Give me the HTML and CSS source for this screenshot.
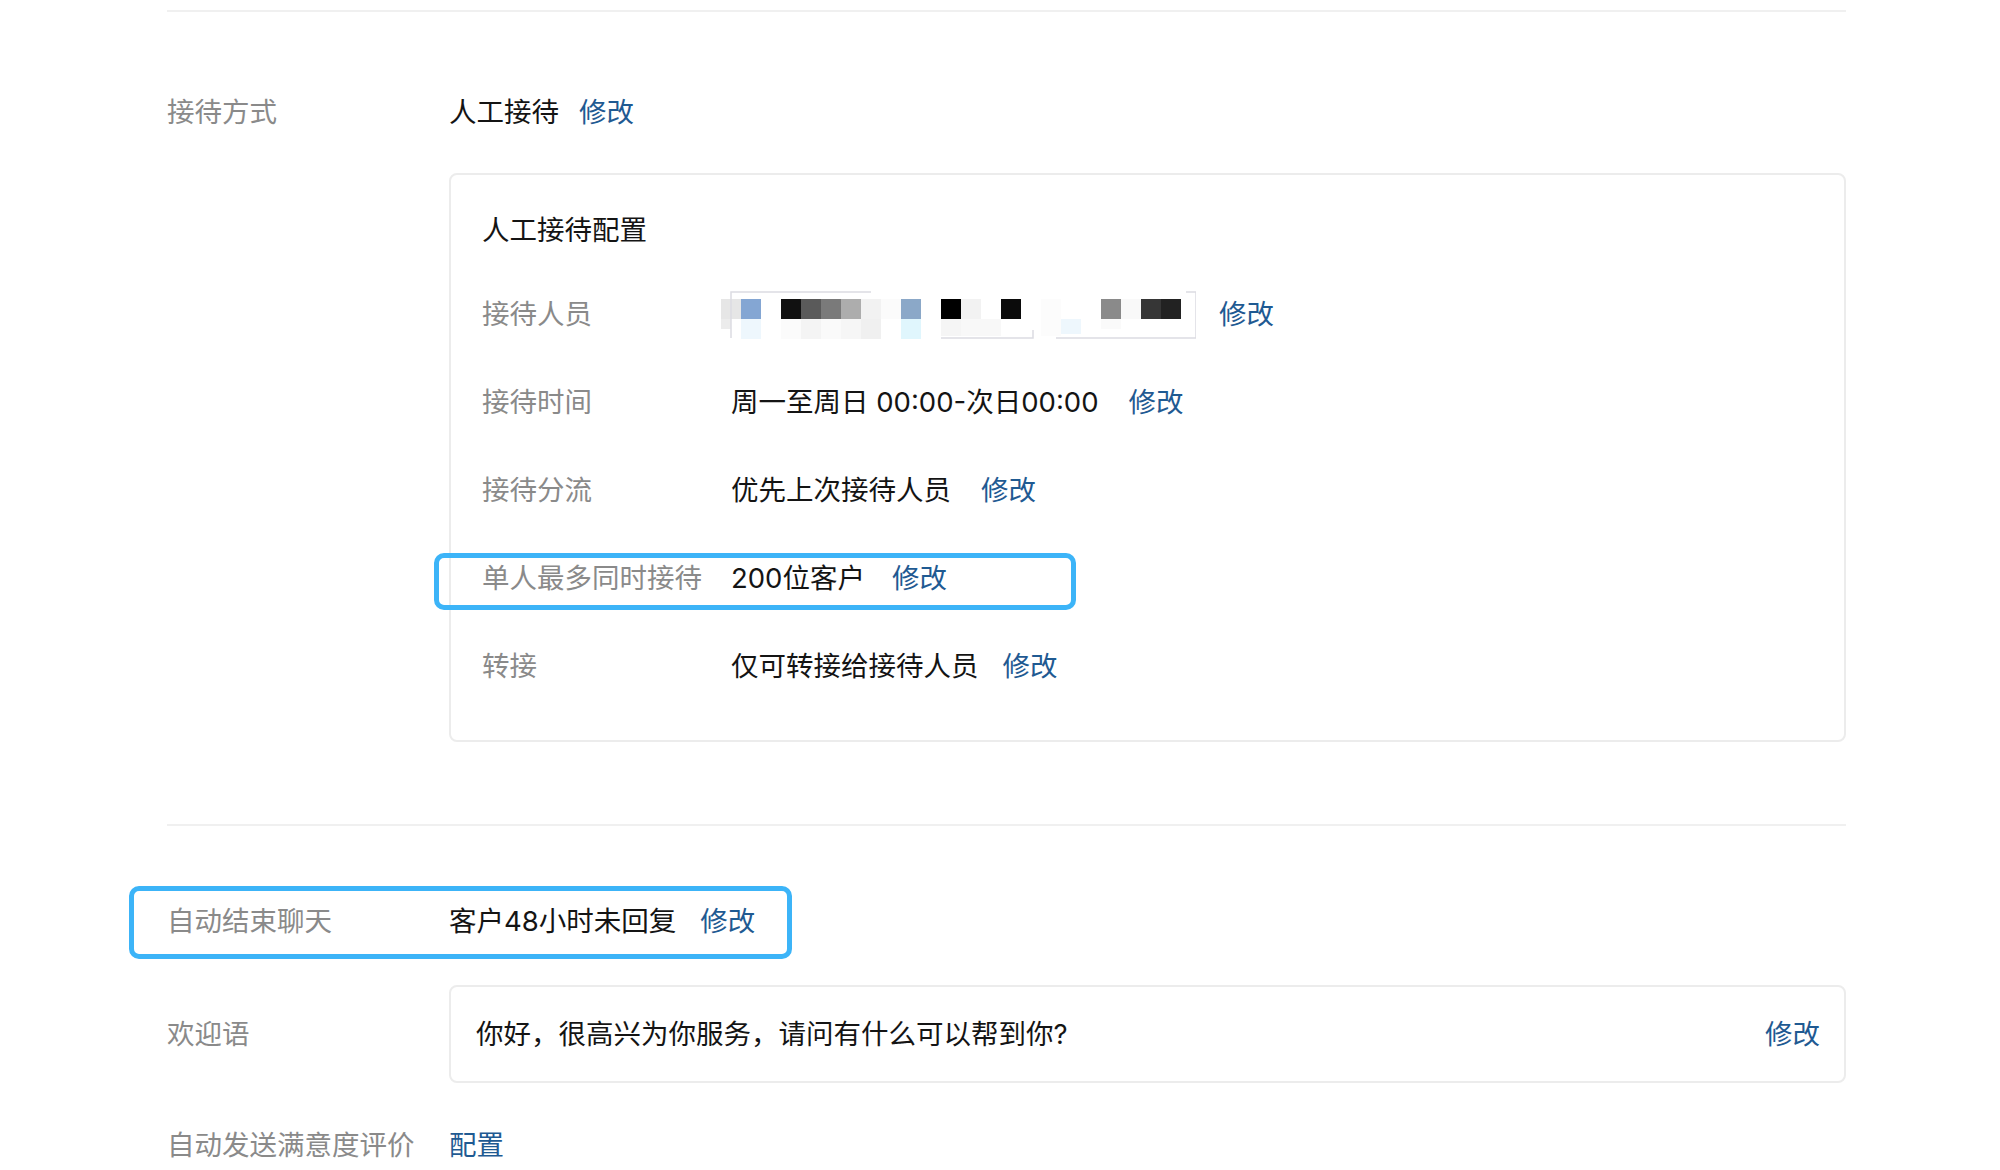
FILE: index.html
```html
<!DOCTYPE html>
<html lang="zh-CN">
<head>
<meta charset="utf-8">
<title>接待设置</title>
<link rel="stylesheet" href="styles.css">
</head>
<body>
<div class="page">
  <div class="divider"></div>

  <div class="row top-row">
    <span class="label">接待方式</span>
    <span class="value">人工接待</span>
    <a class="link link-tight">修改</a>
  </div>

  <div class="card">
    <div class="card-title">人工接待配置</div>
    <div class="card-rows">
      <div class="crow">
        <span class="clabel">接待人员</span>
        <svg class="mosaic" width="480" height="50" viewBox="0 0 480 50" xmlns="http://www.w3.org/2000/svg">
          <g shape-rendering="crispEdges">
            <rect x="5" y="10" width="20" height="20" fill="#e6e6e6"/>
            <rect x="5" y="30" width="10" height="10" fill="#ececec"/>
            <rect x="25" y="10" width="20" height="20" fill="#84a6d3"/>
            <rect x="25" y="30" width="20" height="20" fill="#eef7fd"/>
            <rect x="65" y="10" width="20" height="20" fill="#111111"/>
            <rect x="65" y="30" width="20" height="20" fill="#fbfbfb"/>
            <rect x="85" y="10" width="20" height="20" fill="#5a5a5a"/>
            <rect x="85" y="30" width="20" height="20" fill="#f4f4f4"/>
            <rect x="105" y="10" width="20" height="20" fill="#7a7a7a"/>
            <rect x="105" y="30" width="20" height="20" fill="#fafafa"/>
            <rect x="125" y="10" width="20" height="20" fill="#adadad"/>
            <rect x="125" y="30" width="20" height="20" fill="#f6f6f6"/>
            <rect x="145" y="10" width="20" height="20" fill="#f2f2f2"/>
            <rect x="145" y="30" width="20" height="20" fill="#f0f0f0"/>
            <rect x="165" y="10" width="20" height="20" fill="#fbfbfb"/>
            <rect x="185" y="10" width="20" height="20" fill="#8ba8c8"/>
            <rect x="185" y="30" width="20" height="20" fill="#e0f6fd"/>
            <rect x="225" y="10" width="20" height="20" fill="#000000"/>
            <rect x="225" y="30" width="20" height="17" fill="#f5f5f5"/>
            <rect x="245" y="10" width="20" height="20" fill="#f2f2f2"/>
            <rect x="245" y="30" width="20" height="17" fill="#f8f8f8"/>
            <rect x="265" y="30" width="20" height="17" fill="#f8f8f8"/>
            <rect x="285" y="10" width="20" height="20" fill="#0b0b0b"/>
            <rect x="325" y="10" width="20" height="20" fill="#fcfcfc"/>
            <rect x="325" y="30" width="20" height="17" fill="#fcfcfc"/>
            <rect x="345" y="30" width="20" height="15" fill="#eef7fd"/>
            <rect x="385" y="10" width="20" height="20" fill="#8a8a8a"/>
            <rect x="385" y="30" width="20" height="10" fill="#fafafa"/>
            <rect x="405" y="10" width="20" height="20" fill="#f9f9f9"/>
            <rect x="425" y="10" width="20" height="20" fill="#363636"/>
            <rect x="445" y="10" width="20" height="20" fill="#222222"/>
          </g>
          <g fill="none" stroke="#dcdce2" stroke-width="1.5">
            <path d="M15 49 V3 H155"/>
            <path d="M225 49 H317 V41"/>
            <path d="M340 49 H480 V3 H470"/>
          </g>
        </svg>
        <a class="link">修改</a>
      </div>
      <div class="crow">
        <span class="clabel">接待时间</span>
        <span class="value">周一至周日 00:00-次日00:00</span>
        <a class="link link-wide">修改</a>
      </div>
      <div class="crow">
        <span class="clabel">接待分流</span>
        <span class="value">优先上次接待人员</span>
        <a class="link link-wide">修改</a>
      </div>
      <div class="crow mark-row">
        <span class="clabel">单人最多同时接待</span>
        <span class="value">200位客户</span>
        <a class="link link-mid">修改</a>
        <span class="mark mark-a"></span>
      </div>
      <div class="crow">
        <span class="clabel">转接</span>
        <span class="value">仅可转接给接待人员</span>
        <a class="link">修改</a>
      </div>
    </div>
  </div>

  <div class="divider divider-2"></div>

  <div class="row end-row mark-row">
    <span class="label">自动结束聊天</span>
    <span class="value">客户48小时未回复</span>
    <a class="link">修改</a>
    <span class="mark mark-b"></span>
  </div>

  <div class="row welcome-row">
    <span class="label">欢迎语</span>
    <div class="welcome-box">
      <span class="value">你好，很高兴为你服务，请问有什么可以帮到你?</span>
      <a class="link">修改</a>
    </div>
  </div>

  <div class="row rate-row">
    <span class="label">自动发送满意度评价</span>
    <a class="link link-flush">配置</a>
  </div>
</div>
</body>
</html>
```

FILE: styles.css
```css
* {
  box-sizing: border-box;
}

html, body {
  margin: 0;
  padding: 0;
  background: #ffffff;
}

body {
  font-family: "Inter", "Noto Sans CJK SC", "Noto Sans", sans-serif;
  font-size: 27.5px;
  line-height: 40px;
  color: #141414;
  width: 2000px;
  height: 1170px;
  overflow: hidden;
}

.page {
  padding: 10px 154px 0 167px;
}

.divider {
  height: 2px;
  background: #f0f0f0;
}

.row {
  display: flex;
  align-items: center;
  height: 40px;
}

.label {
  width: 282px;
  flex: none;
  color: #8a8a8a;
  white-space: nowrap;
}

.value {
  color: #141414;
  white-space: nowrap;
}

.link {
  color: #1f5a92;
  margin-left: 24px;
  cursor: pointer;
  white-space: nowrap;
}

.link-tight {
  margin-left: 20px;
}

.link-wide {
  margin-left: 30px;
}

.link-mid {
  margin-left: 27px;
}

.link-flush {
  margin-left: 0;
}

.top-row {
  margin-top: 80px;
}

.card {
  margin-top: 41px;
  margin-left: 282px;
  border: 2px solid #ececec;
  border-radius: 8px;
  padding: 35px 30px 54px 31px;
}

.card-title {
  height: 40px;
  color: #141414;
}

.card-rows {
  margin-top: 44px;
  display: flex;
  flex-direction: column;
  gap: 48px;
}

.crow {
  display: flex;
  align-items: center;
  height: 40px;
}

.clabel {
  width: 249px;
  flex: none;
  color: #8a8a8a;
  white-space: nowrap;
}

.mosaic {
  flex: none;
  margin-left: -15px;
  display: block;
}

.mosaic + .link {
  margin-left: 23px;
}

.mark-row {
  position: relative;
}

.mark {
  position: absolute;
  border: 5px solid #3cb4f8;
  border-radius: 10px;
  pointer-events: none;
}

.mark-a {
  left: -48px;
  top: -5px;
  width: 642px;
  height: 57px;
}

.mark-b {
  left: -38px;
  top: -15px;
  width: 663px;
  height: 73px;
}

.divider-2 {
  margin-top: 82px;
}

.end-row {
  margin-top: 75px;
}

.welcome-row {
  margin-top: 44px;
  height: 98px;
}

.welcome-box {
  flex: 1;
  height: 98px;
  border: 2px solid #ececec;
  border-radius: 8px;
  padding: 0 24px 0 25px;
  display: flex;
  align-items: center;
  justify-content: space-between;
}

.rate-row {
  margin-top: 42px;
}
```
